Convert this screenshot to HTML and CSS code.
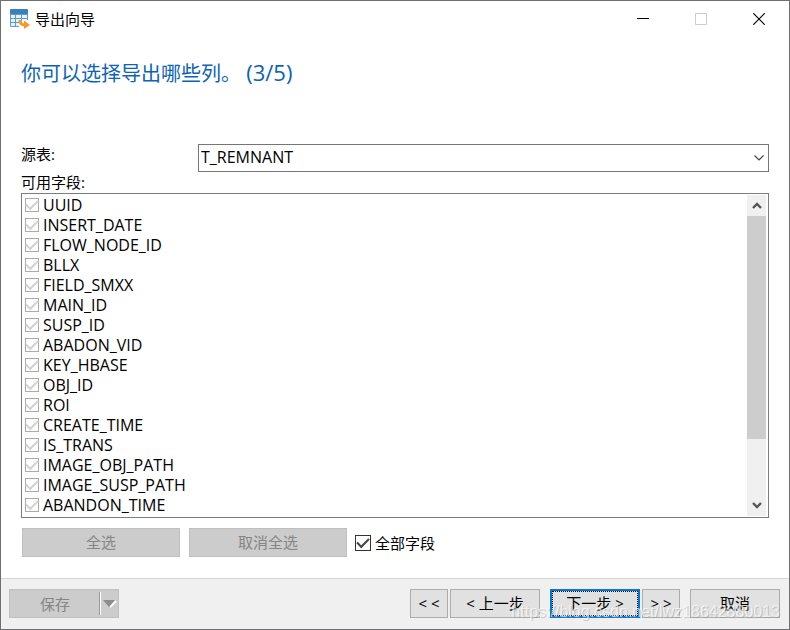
FILE: index.html
```
<!DOCTYPE html>
<html lang="zh-CN">
<head>
<meta charset="utf-8">
<title>导出向导</title>
<link rel="stylesheet" href="styles.css">
</head>
<body>
<main class="window">
  <header class="titlebar">
    <svg class="app-icon" viewBox="0 0 20 20" aria-hidden="true">
      <rect x="0" y="1" width="18" height="17" rx="1" fill="#5e9bcd"/>
      <rect x="0" y="0" width="18" height="5" rx="1" fill="#3b80ba"/>
      <path d="M1 6h4v3H1zM6 6h5v3H6zM12 6h5v3h-5zM1 10h4v3H1zM6 10h5v3H6zM12 10h5v3h-5zM1 14h4v3H1zM6 14h5v3H6z" fill="#e4f2fd"/>
      <path d="M9 18v-5l5-2h4v7z" fill="#fff"/>
      <path d="M10 11c0 4 2 5 5 5" fill="none" stroke="#f59a23" stroke-width="3"/>
      <path d="M14 11.500l6 4.500-6 4z" fill="#f59a23"/>
    </svg>
    <span class="title">导出向导</span>
    <div class="controls">
      <button class="control" type="button" aria-label="最小化"><svg viewBox="0 0 12 12"><path d="M0 5.500h12" stroke="#000"/></svg></button>
      <button class="control" type="button" aria-label="最大化" disabled><svg viewBox="0 0 12 12"><path d="M.5.5h11v11H.5z" fill="none" stroke="#ccc"/></svg></button>
      <button class="control" type="button" aria-label="关闭"><svg viewBox="0 0 12 12"><path d="M.3.3l11.400 11.400M11.700.3L.3 11.700" stroke="#000" stroke-width="1.200"/></svg></button>
    </div>
  </header>

  <section class="content">
    <h1 class="heading">你可以选择导出哪些列。 <span class="progress">(3/5)</span></h1>
    <div class="source">
      <label class="source-label" for="source">源表:</label>
      <div class="combo">
        <select class="combo-select" id="source"><option>T_REMNANT</option></select>
        <svg class="combo-arrow" viewBox="0 0 10 6" aria-hidden="true"><path d="M.5.5L5 5 9.500.5" fill="none" stroke="#444" stroke-width="1.200"/></svg>
      </div>
    </div>
    <h2 class="list-label" id="fields-label">可用字段:</h2>
    <div class="listbox">
      <div class="fields" role="group" aria-labelledby="fields-label">
        <label class="field"><input class="check" type="checkbox" checked disabled>UUID</label>
        <label class="field"><input class="check" type="checkbox" checked disabled>INSERT_DATE</label>
        <label class="field"><input class="check" type="checkbox" checked disabled>FLOW_NODE_ID</label>
        <label class="field"><input class="check" type="checkbox" checked disabled>BLLX</label>
        <label class="field"><input class="check" type="checkbox" checked disabled>FIELD_SMXX</label>
        <label class="field"><input class="check" type="checkbox" checked disabled>MAIN_ID</label>
        <label class="field"><input class="check" type="checkbox" checked disabled>SUSP_ID</label>
        <label class="field"><input class="check" type="checkbox" checked disabled>ABADON_VID</label>
        <label class="field"><input class="check" type="checkbox" checked disabled>KEY_HBASE</label>
        <label class="field"><input class="check" type="checkbox" checked disabled>OBJ_ID</label>
        <label class="field"><input class="check" type="checkbox" checked disabled>ROI</label>
        <label class="field"><input class="check" type="checkbox" checked disabled>CREATE_TIME</label>
        <label class="field"><input class="check" type="checkbox" checked disabled>IS_TRANS</label>
        <label class="field"><input class="check" type="checkbox" checked disabled>IMAGE_OBJ_PATH</label>
        <label class="field"><input class="check" type="checkbox" checked disabled>IMAGE_SUSP_PATH</label>
        <label class="field"><input class="check" type="checkbox" checked disabled>ABANDON_TIME</label>
      </div>
      <div class="scrollbar" aria-hidden="true">
        <svg class="scroll-arrow" viewBox="0 0 10 7"><path d="M1 6l4-4 4 4" fill="none" stroke="#555" stroke-width="2.400"/></svg>
        <div class="track"><div class="thumb"></div></div>
        <svg class="scroll-arrow" viewBox="0 0 10 7"><path d="M1 1l4 4 4-4" fill="none" stroke="#555" stroke-width="2.400"/></svg>
      </div>
    </div>
    <div class="selection">
      <button class="button wide" type="button" disabled>全选</button>
      <button class="button wide" type="button" disabled>取消全选</button>
      <label class="all-fields"><input class="check large" type="checkbox" checked>全部字段</label>
    </div>
  </section>

  <footer class="footer">
    <div class="split">
      <button class="save" type="button" disabled>保存</button>
      <button class="save-menu" type="button" aria-label="保存选项" disabled><svg viewBox="0 0 14 8"><path d="M7 7l6-6" stroke="#fff" stroke-width="2"/><path d="M0 0h12L6 7z" fill="#8c8c8c"/></svg></button>
    </div>
    <div class="steps">
      <button class="button jump" type="button">&lt; &lt;</button>
      <button class="button step" type="button">&lt; 上一步</button>
    </div>
    <div class="steps">
      <button class="button step primary" type="button">下一步 &gt;</button>
      <button class="button jump" type="button">&gt; &gt;</button>
    </div>
    <button class="button step" type="button">取消</button>
    <span class="watermark">https://blog.csdn.net/lwz18642880013</span>
  </footer>
</main>
</body>
</html>
```
FILE: styles.css
```
* {
  box-sizing: border-box;
}

body {
  margin: 0;
  color: #000;
  font-family: "Open Sans", "Noto Sans CJK SC", sans-serif;
  font-size: 15px;
  line-height: 20px;
}

button,
select {
  margin: 0;
  color: inherit;
  font: inherit;
}

.window {
  display: flex;
  flex-direction: column;
  min-height: 100vh;
  border: 1px solid #707072;
  background: #fff;
}

.titlebar {
  display: flex;
  align-items: center;
  gap: 5px;
  height: 36px;
  padding: 0 1px 0 9px;
}

.app-icon {
  width: 20px;
  height: 20px;
}

.controls {
  display: flex;
  margin-left: auto;
}

.control {
  display: grid;
  place-items: center;
  width: 58px;
  height: 36px;
  padding: 0;
  border: 0;
  background: none;
}

.control svg {
  width: 12px;
  height: 12px;
}

.content {
  display: flex;
  flex: 1;
  flex-direction: column;
  padding: 20px 20px 21px;
}

.heading {
  margin: 0 0 55px;
  color: #0c63b8;
  font-size: 20px;
  font-weight: 400;
  line-height: 30px;
}

.progress {
  font-size: 22px;
}

.source {
  display: grid;
  grid-template-columns: 177px 1fr;
  align-items: start;
}

.combo {
  display: grid;
  align-items: center;
}

.combo-select {
  grid-area: 1 / 1;
  width: 100%;
  height: 28px;
  padding: 0 2px 2px;
  border: 1px solid #767676;
  border-radius: 0;
  background: #fff;
  font-size: 16px;
  appearance: none;
}

.combo-arrow {
  grid-area: 1 / 1;
  justify-self: end;
  width: 10px;
  height: 6px;
  margin-right: 5px;
  pointer-events: none;
}

.list-label {
  margin: 0;
  font-size: 15px;
  font-weight: 400;
  line-height: 21px;
}

.listbox {
  display: flex;
  flex: 1;
  border: 1px solid #7a7d80;
  padding: 1px;
}

.fields {
  flex: 1;
  font-size: 16px;
}

.field,
.all-fields {
  display: flex;
  align-items: center;
  gap: 4px;
}

.field {
  padding-left: 2px;
}

.check {
  display: grid;
  place-items: center;
  width: 14px;
  height: 14px;
  margin: 0;
  border: 1px solid #333;
  background: #fff;
  color: #444;
  appearance: none;
}

.check:checked::before {
  width: 10px;
  height: 5px;
  margin-top: -3px;
  border: solid currentColor;
  border-width: 0 0 2px 2px;
  content: "";
  transform: rotate(-45deg);
}

.check:disabled {
  border-color: #aaa;
  color: #d2d2d2;
}

.large {
  width: 16px;
  height: 16px;
}

.scrollbar {
  display: flex;
  flex-direction: column;
  align-items: center;
  width: 19px;
  margin-right: 1px;
  background: #f0f0f0;
}

.scroll-arrow {
  width: 10px;
  height: 21px;
}

.track {
  flex: 1;
  width: 100%;
}

.thumb {
  height: 80%;
  background: #cdcdcd;
}

.selection {
  display: flex;
  gap: 9px;
  padding: 10px 1px 0;
}

.all-fields {
  margin-left: -1px;
}

.button {
  height: 29px;
  padding: 0 0 1px;
  border: 1px solid #adadad;
  background: #e1e1e1;
  white-space: nowrap;
}

.button:disabled,
.split {
  border-color: #bfbfbf;
  background: #ccc;
  color: #858585;
}

.wide {
  width: 158px;
}

.footer {
  position: relative;
  display: flex;
  gap: 10px;
  padding: 10px 9px 11px 8px;
  border-top: 1px solid #d5d5d5;
  background: #f0f0f0;
}

.split {
  display: flex;
  align-items: center;
  width: 110px;
  height: 29px;
  margin-right: auto;
  border: 1px solid #bfbfbf;
}

.save,
.save-menu {
  padding: 0;
  border: 0;
  background: none;
  color: inherit;
}

.save {
  flex: 1;
}

.save-menu {
  display: grid;
  place-items: center;
  width: 18px;
  height: 23px;
  border-left: 1px solid #fff;
  box-shadow: -1px 0 #999;
}

.save-menu svg {
  width: 14px;
  height: 8px;
}

.steps {
  display: flex;
  gap: 2px;
}

.jump {
  width: 38px;
}

.step {
  width: 90px;
}

.primary {
  border: 2px solid #0078d7;
  outline: 1px dotted #000;
  outline-offset: -3px;
}

.watermark {
  position: absolute;
  right: 9px;
  bottom: 7px;
  color: rgb(255 255 255 / 65%);
  font-family: "Liberation Sans", sans-serif;
  font-size: 16px;
  text-shadow: 1px 1px rgb(140 140 140 / 40%);
  pointer-events: none;
}
```
